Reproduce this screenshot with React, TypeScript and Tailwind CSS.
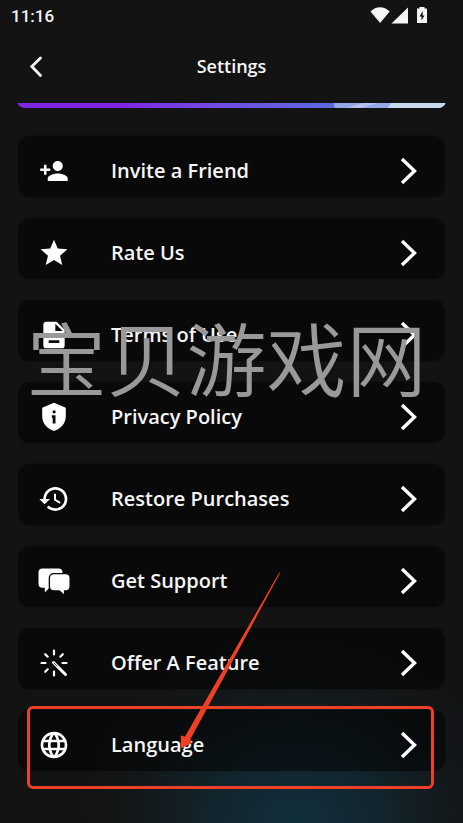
import type { ComponentType } from 'react'
import {
  MdDescription,
  MdHistory,
  MdLanguage,
  MdPersonAddAlt1,
  MdStar,
} from 'react-icons/md'

type IconProps = { className?: string }

function InviteIcon({ className }: IconProps) {
  return <MdPersonAddAlt1 className={`${className} -scale-x-100 p-px`} />
}

function ShieldIcon({ className }: IconProps) {
  return (
    <svg viewBox="0 0 32 32" fill="currentColor" className={className}>
      <path
        fillRule="evenodd"
        d="M16 1.7 4.2 6.8v8.4c0 7 5 12.6 11.8 14.8 6.8-2.2 11.8-7.8 11.8-14.8V6.8L16 1.7ZM14.7 9.5h2.8v2.8h-2.8V9.5ZM13.8 14.2h3.7v8.2h-2.8v-5.6h-.9v-2.6Z"
      />
    </svg>
  )
}

function ChatIcon({ className }: IconProps) {
  return (
    <svg viewBox="0 0 32 32" fill="currentColor" className={className}>
      <path d="M4.5 3.5h16a4 4 0 0 1 4 4v.6H15.5a4.8 4.8 0 0 0-4.8 4.8v10.5L6.8 27.5v-4.7H4.5a4 4 0 0 1-4-4V7.5a4 4 0 0 1 4-4Z" />
      <path d="M16 9.2h11.5a4 4 0 0 1 4 4v8a4 4 0 0 1-4 4h-1.6v4l-4.3-4h-5.6a4 4 0 0 1-4-4v-8a4 4 0 0 1 4-4Z" />
    </svg>
  )
}

function WandIcon({ className }: IconProps) {
  return (
    <svg
      viewBox="0 0 32 32"
      fill="none"
      stroke="currentColor"
      strokeWidth="2.2"
      strokeLinecap="round"
      className={className}
    >
      <path d="M16 3.5v4M16 24.5v4M3.5 16h4M24.5 16h4M7.2 7.2 9.7 9.7M24.8 7.2 22.3 9.7M7.2 24.8 9.7 22.3" />
      <path d="M15.5 15.5 27.5 27.5" strokeWidth="3" />
      <path d="M16 16 19 19" stroke="#555" strokeWidth="1" />
    </svg>
  )
}

const items: { label: string; icon: ComponentType<IconProps> }[] = [
  { label: 'Invite a Friend', icon: InviteIcon },
  { label: 'Rate Us', icon: MdStar },
  { label: 'Terms of Use', icon: MdDescription },
  { label: 'Privacy Policy', icon: ShieldIcon },
  { label: 'Restore Purchases', icon: MdHistory },
  { label: 'Get Support', icon: ChatIcon },
  { label: 'Offer A Feature', icon: WandIcon },
  { label: 'Language', icon: MdLanguage },
]

function StatusBar() {
  return (
    <div className="flex h-8 items-center justify-between pr-[35px] pl-[11px]">
      <span className="font-[Roboto,sans-serif] text-[17px] leading-6 font-medium">11:16</span>
      <svg viewBox="0 0 58 18" fill="currentColor" className="h-[18px] w-[58px]">
        <path d="M.5 4.500C6-1.200 14-1.200 19.700 4.500L10.100 16 .5 4.500Z" />
        <path d="M38 .5V16.5H21.5L38 .5Z" />
        <path
          fillRule="evenodd"
          d="M49.5 0h5v1.5H57V16H47V1.5h2.5V0ZM52.7 4 49.5 9.5h2v4l3-5h-1.8V4Z"
        />
      </svg>
    </div>
  )
}

function Header() {
  return (
    <header className="grid h-[71px] grid-cols-[1fr_auto_1fr] items-center px-6 pb-[3px]">
      <button type="button" aria-label="Back" className="flex size-6 items-center justify-center">
        <svg
          viewBox="0 0 24 24"
          fill="none"
          stroke="currentColor"
          strokeWidth="2.8"
          strokeLinecap="round"
          className="size-6"
        >
          <path d="M16.5 4 7.8 12.5 16.5 21.5" />
        </svg>
      </button>
      <h1 className="text-lg font-semibold">Settings</h1>
    </header>
  )
}

function Banner() {
  return (
    <div className="mx-[17px] flex h-[5px] items-end overflow-hidden">
      <div className="flex h-10 w-full shrink-0 items-end overflow-hidden rounded-lg bg-linear-to-r from-[#7d27e2] from-25% to-[#5a6be0] to-75%">
        <svg viewBox="0 0 428 5" preserveAspectRatio="none" className="h-[5px] w-full">
          <path d="M316 0h112v5H317Z" fill="#95a9e6" />
          <path d="M330 5 345 0h14l-15 5Z" fill="#b5c2ec" />
          <path d="M373 0h55v5h-58Z" fill="#c6d9ee" />
        </svg>
      </div>
    </div>
  )
}

function Annotation() {
  return (
    <>
      <div className="pointer-events-none absolute top-[307px] right-[10px] left-0 flex justify-center font-['Noto_Sans_CJK_SC',sans-serif] text-[80px] leading-[96px] font-[350] whitespace-nowrap text-[#999]">
        宝贝游戏网
      </div>
      <div className="pointer-events-none absolute top-[706px] right-[29px] left-[27px] h-[83px] rounded-md border-3 border-[#ee4026]" />
      <svg
        viewBox="0 0 102 180"
        fill="#ee4026"
        className="pointer-events-none absolute top-[572px] left-[180px] h-[180px] w-[102px]"
      >
        <path d="M100.2 .8 10.5 167l.8 4.5L.8 176.5.8 163.5l4.2 1L99.3.5Z" />
      </svg>
    </>
  )
}

export default function App() {
  return (
    <div className="relative min-h-screen overflow-hidden bg-[#131313] bg-[radial-gradient(ellipse_220px_190px_at_64%_100%,#122f3d_0%,#12242c_40%,#131719_75%,#131313_100%)] font-['Open_Sans',sans-serif] text-[#f5f5f5]">
      <StatusBar />
      <Header />
      <main>
        <Banner />
        <ul className="flex flex-col gap-[21px] px-[18px] pt-7 pb-12">
          {items.map(({ label, icon: Icon }) => (
            <li key={label}>
              <button
                type="button"
                className="flex h-[61px] w-full items-center rounded-xl bg-black/50 pt-2 pr-[22px] pl-5 text-left shadow-[0_0_3px_rgba(0,0,0,0.3)]"
              >
                <Icon className="size-8 shrink-0 text-white" />
                <span className="ml-[41px] flex-1 text-xl font-semibold">{label}</span>
                <svg
                  viewBox="0 0 28 28"
                  fill="none"
                  stroke="#fff"
                  strokeWidth="3.4"
                  className="size-7 shrink-0"
                >
                  <path d="M7 2 19.5 14 7 26" />
                </svg>
              </button>
            </li>
          ))}
        </ul>
      </main>
      <Annotation />
    </div>
  )
}
